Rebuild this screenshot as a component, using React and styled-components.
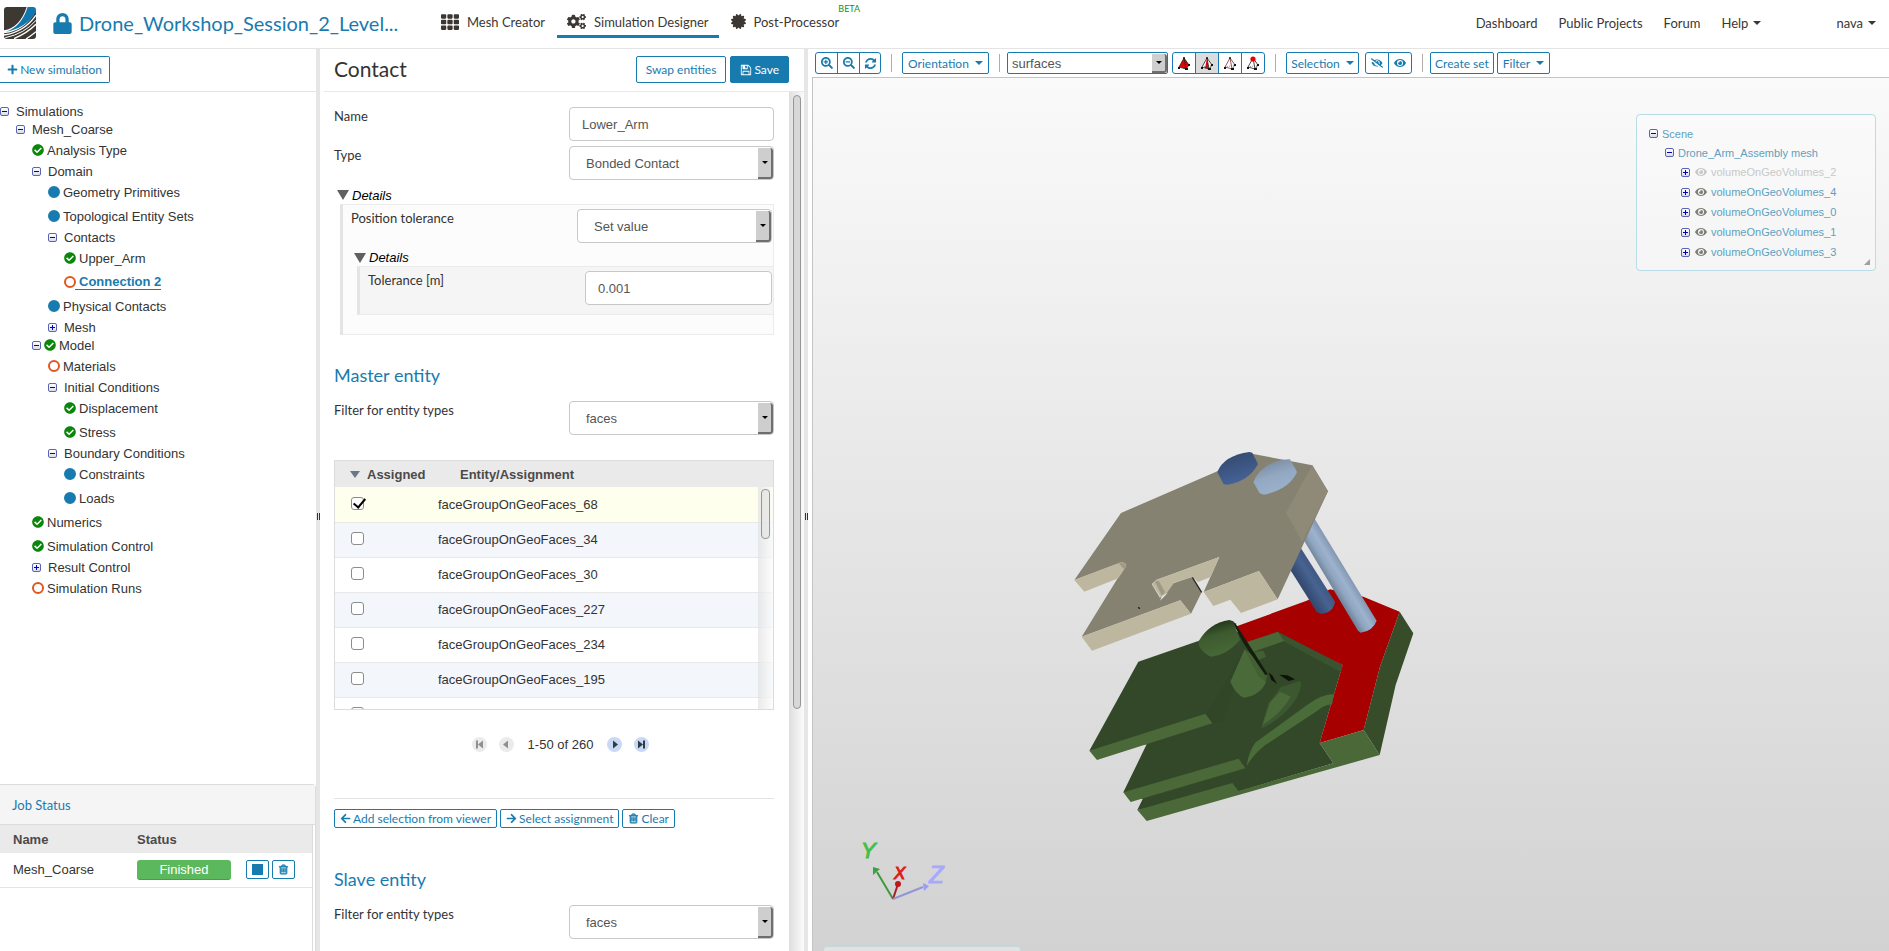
import React from 'react'
import styled, { createGlobalStyle, css } from 'styled-components'
import {
  FaArrowLeft, FaArrowRight, FaCertificate, FaCheckCircle, FaCogs, FaEye, FaEyeSlash,
  FaLock, FaPlus, FaSearchMinus, FaSearchPlus, FaTh
} from 'react-icons/fa'

const blue = '#187bb0';
const lato = "Lato, 'Open Sans', sans-serif";
const helvetica = "'Liberation Sans', Arial, sans-serif";

const GlobalStyle = createGlobalStyle`
  * {
    box-sizing: border-box;
  }
  body {
    margin: 0;
    overflow: hidden;
    background-color: #fff;
    color: #333;
    font-family: ${helvetica};
    font-size: 13px;
  }
  button, input, select {
    font: inherit;
    margin: 0;
  }
  svg {
    display: block;
    flex: none;
  }
`;

const Page = styled.div`
  display: flex;
  flex-direction: column;
  height: 100vh;
`;

/* header */

const Header = styled.header`
  display: flex;
  align-items: center;
  flex: none;
  height: 49px;
  padding: 0 13px 2px 4px;
  border-bottom: 1px solid #e4e4e4;
  font-family: ${lato};
  font-size: 13px;
  color: #3c3732;
`;

const ProjectLink = styled.a`
  display: flex;
  align-items: center;
  gap: 6px;
  width: 353px;
  margin-left: 16px;
  color: ${blue};
  font-size: 20px;
  text-decoration: none;
`;

const Tabs = styled.nav`
  display: flex;
  gap: 2px;
  margin-left: 26px;
`;

const Tab = styled.a`
  display: flex;
  align-items: center;
  gap: 8px;
  height: 30px;
  padding: 0 10px;
  border-bottom: 3px solid ${props => props.$active ? blue : 'transparent'};
  color: inherit;
  text-decoration: none;
`;

const Beta = styled.sup`
  align-self: flex-start;
  margin: -5px 0 0 -9px;
  color: #149314;
  font-size: 9px;
  line-height: 12px;
`;

const Account = styled.nav`
  display: flex;
  gap: 21px;
  margin-left: auto;
`;

const AccountLink = styled.a`
  display: flex;
  align-items: center;
  gap: 5px;
  margin-left: ${props => props.$user ? '54px' : 0};
  color: inherit;
  text-decoration: none;
`;

const Caret = styled.span`
  border: 4px solid transparent;
  border-top-color: currentColor;
  border-bottom-width: 0;
`;

/* columns */

const Columns = styled.main`
  display: flex;
  flex: 1;
  min-height: 0;
`;

const Sidebar = styled.aside`
  display: flex;
  flex-direction: column;
  flex: 0 0 316px;
`;

const Splitter = styled.div`
  display: flex;
  align-items: center;
  justify-content: flex-end;
  gap: 1px;
  flex: 0 0 4px;
  padding-top: 32px;
  background-color: #e6e6e6;
  &::before, &::after {
    content: '';
    width: 1px;
    height: 7px;
    background-color: #333;
  }
`;

const Button = styled.button`
  display: flex;
  align-items: center;
  justify-content: center;
  gap: 2px;
  height: ${props => props.$size === 'large' ? 27 : props.$size === 'small' ? 19 : 22}px;
  padding: 0 ${props => props.$size === 'large' ? 9 : 5}px;
  border: 1px solid ${blue};
  border-radius: 2px;
  background-color: ${props => props.$primary ? blue : '#fff'};
  color: ${props => props.$primary ? '#fff' : blue};
  font-family: ${lato};
  font-size: 12px;
  white-space: nowrap;
  cursor: pointer;
`;

const SidebarBar = styled.div`
  flex: none;
  height: 43px;
  padding-top: 7px;
  border-bottom: 1px solid #e4e4e4;
`;

const NewButton = styled(Button)`
  width: 110px;
  border-left: 0;
  border-radius: 0 2px 2px 0;
`;

/* simulation tree */

const Tree = styled.ul`
  flex: 1;
  min-height: 0;
  margin: 0;
  padding: 10px 0 0;
  list-style: none;
`;

const TreeRow = styled.li`
  display: flex;
  align-items: center;
  gap: 3px;
  height: ${props => props.$folder ? 18 : 24}px;
  padding-left: ${props => props.$level * 16}px;
`;

const TreeText = styled.a`
  padding-left: ${props => props.$wide ? 4 : 0}px;
  color: #333;
  text-decoration: none;
  ${props => props.$selected && css`
    margin-left: -4px;
    padding-left: 4px;
    border-bottom: 1px solid ${blue};
    color: ${blue};
    font-weight: bold;
  `}
`;

const Dot = styled.span`
  width: 12px;
  height: 12px;
  border: 2px solid ${props => props.$color};
  border-radius: 50%;
  background-color: ${props => props.$filled ? props.$color : '#fff'};
`;

const ToggleButton = styled.button`
  position: relative;
  flex: none;
  width: 9px;
  height: 9px;
  padding: 0;
  border: 1px solid #5a64b4;
  border-radius: 2px;
  background: linear-gradient(#fff, #dcdce8);
  &::before {
    content: '';
    position: absolute;
    left: 1px;
    top: 3px;
    width: 5px;
    height: 1px;
    background-color: #0000c0;
  }
  &::after {
    content: '';
    position: absolute;
    display: ${props => props.$open ? 'none' : 'block'};
    left: 3px;
    top: 1px;
    width: 1px;
    height: 5px;
    background-color: #0000c0;
  }
`;

/* jobs */

const Jobs = styled.section`
  flex: none;
  height: 167px;
  border: solid #dcdcdc;
  border-width: 1px 1px 0 0;
  border-radius: 0 4px 0 0;
`;

const JobsTitle = styled.h2`
  margin: 0;
  height: 40px;
  padding-left: 12px;
  border-bottom: 1px solid #dcdcdc;
  background-color: #f5f5f5;
  color: ${blue};
  font-family: ${lato};
  font-size: 13px;
  font-weight: normal;
  line-height: 40px;
`;

const JobsBody = styled.div`
  height: 126px;
  margin-right: 2px;
  border-right: 1px solid #dcdcdc;
`;

const JobsTable = styled.table`
  width: 100%;
  border-collapse: collapse;
  table-layout: fixed;
  th {
    height: 28px;
    padding: 0 0 0 13px;
    background-color: #eaeaea;
    color: #4a4a4a;
    text-align: left;
  }
  td {
    height: 34px;
    padding: 0 0 0 13px;
    border-bottom: 1px solid #e4e4e4;
  }
`;

const JobsCol = styled.col`
  width: ${props => props.$w}px;
`;

const Badge = styled.span`
  display: block;
  width: 94px;
  height: 20px;
  border-bottom: 1px solid #4a9c4a;
  border-radius: 3px;
  background-color: #5cb85c;
  color: #fff;
  line-height: 19px;
  text-align: center;
`;

const JobButtons = styled.div`
  display: flex;
  gap: 3px;
`;

const Stop = styled.span`
  width: 11px;
  height: 11px;
  background-color: ${blue};
`;

/* contact form */

const Panel = styled.section`
  display: flex;
  flex-direction: column;
  flex: 0 0 484px;
  padding-left: 4px;
`;

const PanelHead = styled.div`
  display: flex;
  align-items: flex-start;
  gap: 4px;
  flex: none;
  height: 43px;
  padding: 7px 15px 0 10px;
  border-bottom: 1px solid #e9e9e9;
`;

const PanelTitle = styled.h1`
  margin: 0 auto 0 0;
  font-family: ${lato};
  font-size: 21px;
  font-weight: normal;
  line-height: 26px;
`;

const PanelBody = styled.div`
  display: flex;
  flex: 1;
  min-height: 0;
`;

const Form = styled.form`
  flex: 1;
  min-width: 0;
  padding: 15px 15px 0 10px;
  overflow: hidden;
`;

const Scrollbar = styled.div`
  flex: 0 0 15px;
  padding: 3px 3px 0 4px;
  background: linear-gradient(to right, #dedede, #fbfbfb);
`;

const Thumb = styled.div`
  height: ${props => props.$h}px;
  border: 1px solid #969696;
  border-radius: 4px;
  background-color: ${props => props.$light ? 'rgba(225, 225, 225, .6)' : '#d8d8d8'};
`;

const FieldRow = styled.div`
  display: flex;
  justify-content: space-between;
  margin-bottom: 5px;
`;

const Label = styled.label`
  color: #333;
  font-family: ${lato};
  font-size: 13px;
  line-height: 18px;
`;

const field = css`
  height: 34px;
  border: 1px solid #c8c8c8;
  border-radius: 4px;
  background-color: #fff;
  color: #555;
`;

const TextInput = styled.input`
  ${field}
  width: ${props => props.$w}px;
  padding: 0 12px;
`;

const SelectBox = styled.span`
  display: grid;
  width: ${props => props.$w}px;
`;

const Select = styled.select`
  ${field}
  grid-area: 1 / 1;
  padding: 0 20px 0 16px;
  appearance: none;
  ${props => props.$tool && css`
    height: 22px;
    padding-left: 4px;
    border-color: ${blue};
    border-radius: 2px;
    font-size: 13px;
  `}
`;

const SelectArrow = styled.span`
  grid-area: 1 / 1;
  display: flex;
  align-items: center;
  justify-content: center;
  justify-self: end;
  width: 15px;
  margin: 2px 1px 1px 0;
  border: solid #6e6e6e;
  border-width: 0 2px 2px 0;
  border-radius: 0 3px 3px 0;
  background-color: #cecece;
  color: #000;
  pointer-events: none;
  &::before {
    content: '';
    border: 3px solid transparent;
    border-top-color: #000;
    border-bottom-width: 0;
  }
`;

const Fieldset = styled.details`
  margin-top: 6px;
  margin-left: 3px;
`;

const Summary = styled.summary`
  display: flex;
  align-items: center;
  gap: 3px;
  height: ${props => props.$h}px;
  color: #000;
  font-style: italic;
  list-style: none;
  &::before {
    content: '';
    border: solid transparent;
    border-width: 10px 6px 0;
    border-top-color: #606060;
  }
`;

const FieldsetBody = styled.div`
  margin-left: 3px;
  margin-right: ${props => props.$inner ? -2 : 0}px;
  padding: 4px 1px 0 8px;
  height: ${props => props.$inner ? 49 : 131}px;
  border: 1px solid #ebebeb;
  border-left: 3px solid #e4e4e4;
  background-color: ${props => props.$inner ? '#f5f5f5' : '#fcfcfc'};
`;

const SectionTitle = styled.h2`
  margin: ${props => props.$top}px 0 14px;
  color: ${blue};
  font-family: ${lato};
  font-size: 18px;
  font-weight: normal;
  line-height: 24px;
`;

const EntityBox = styled.div`
  position: relative;
  height: 250px;
  margin-top: 25px;
  border: 1px solid #dcdcdc;
  overflow: hidden;
`;

const EntityTable = styled.table`
  width: 100%;
  border-collapse: collapse;
  table-layout: fixed;
  th {
    height: 26px;
    padding: 0;
    background-color: #eaeaea;
    color: #4a4a4a;
    text-align: left;
  }
`;

const AssignedCol = styled.col`
  width: 87px;
`;

const SortHead = styled.span`
  display: flex;
  align-items: center;
  gap: 7px;
  padding-left: 15px;
  &::before {
    content: '';
    border: solid transparent;
    border-width: 7px 5px 0;
    border-top-color: #6c7786;
  }
`;

const HeadText = styled.span`
  padding-left: 38px;
`;

const EntityRow = styled.tr`
  background-color: ${props => props.$checked ? '#ffffee' : props.$odd ? '#f3f6fb' : '#fff'};
  td {
    height: 35px;
    padding: 0 0 0 16px;
    border-bottom: 1px solid #e8e8e8;
  }
`;

const Check = styled.input`
  display: block;
  width: 13px;
  height: 13px;
  margin: 0 0 2px;
  border: 1px solid #8c8c8c;
  border-radius: 3px;
  background-color: #fff;
  appearance: none;
  &:checked::before {
    content: '';
    display: block;
    width: 5px;
    height: 10px;
    margin: -2px 0 0 4px;
    border: solid #000;
    border-width: 0 2px 2px 0;
    transform: rotate(40deg);
  }
`;

const EntityScroll = styled.div`
  position: absolute;
  top: 26px;
  right: 0;
  bottom: 0;
  width: 15px;
  padding: 2px 3px;
  background: linear-gradient(to right, rgba(225, 225, 225, .7), rgba(252, 252, 252, .7));
`;

const Pager = styled.div`
  display: flex;
  align-items: center;
  justify-content: center;
  gap: 12px;
  height: 69px;
  margin-bottom: 19px;
  padding-left: 13px;
`;

const PagerText = styled.span`
  padding: 0 2px;
`;

const PagerButton = styled.button`
  width: 15px;
  height: 15px;
  padding: 0;
  border: 0;
  border-radius: 50%;
  background-color: ${props => props.disabled ? '#ebebeb' : '#c8d9f5'};
  color: ${props => props.disabled ? '#909090' : '#333a44'};
`;

const Actions = styled.div`
  display: flex;
  gap: 3px;
  padding-top: 10px;
  border-top: 1px solid #e4e4e4;
`;

/* viewer */

const Viewer = styled.section`
  display: flex;
  flex-direction: column;
  flex: 1;
  min-width: 0;
  padding-left: 4px;
`;

const Toolbar = styled.div`
  display: flex;
  align-items: center;
  flex: none;
  height: 28px;
  padding: 0 3px;
`;

const Group = styled.div`
  display: flex;
  margin-right: ${props => props.$after || 0}px;
`;

const GroupButton = styled(Button)`
  width: ${props => props.$w}px;
  height: 22px;
  margin-left: -1px;
  padding: 0;
  border-radius: 0;
  background-color: ${props => props.$pressed ? '#dcdcdc' : '#fff'};
  &:first-child {
    margin-left: 0;
    border-radius: 3px 0 0 3px;
  }
  &:last-child {
    border-radius: 0 3px 3px 0;
  }
`;

const Divider = styled.span`
  width: 1px;
  height: 18px;
  margin: 0 ${props => props.$tight ? 7 : 10}px 0 10px;
  background-color: #b4aca8;
`;

const ToolButton = styled(Button)`
  gap: 6px;
  width: ${props => props.$w}px;
  margin-right: ${props => props.$after || 0}px;
`;

const Stage = styled.div`
  position: relative;
  flex: 1;
  min-height: 0;
  border: solid #c4c4c4;
  border-width: 1px 0 0 1px;
  background: linear-gradient(#fafafa, #d2d2d2);
  overflow: hidden;
`;

const ScenePanel = styled.div`
  position: absolute;
  top: 36px;
  right: 13px;
  width: 240px;
  height: 157px;
  padding: 9px 12px 0;
  border: 1px solid #b9dde6;
  border-radius: 4px;
  background-color: rgba(255, 255, 255, .3);
  font-size: 11px;
`;

const SceneRow = styled.div`
  display: flex;
  align-items: center;
  gap: 4px;
  height: ${props => props.$level === 2 ? 20 : 19}px;
  padding-left: ${props => props.$level * 16}px;
  color: ${props => props.$muted ? '#c8c8c8' : '#5fa0c0'};
  svg {
    margin-left: 1px;
    color: ${props => props.$muted ? '#c8c8c8' : '#808078'};
  }
`;

const Grip = styled.span`
  position: absolute;
  right: 5px;
  bottom: 5px;
  border: 3px solid #a0a0a0;
  border-top-color: transparent;
  border-left-color: transparent;
`;

const FooterPanel = styled.div`
  position: absolute;
  left: 10px;
  bottom: 0;
  width: 198px;
  height: 5px;
  border: 1px solid #c2dade;
  border-bottom: 0;
  border-radius: 4px 4px 0 0;
  background-color: #e2e2e2;
`;

const glyphs = {
  save: 'M512 1536h768v-384h-768v384zM1408 1536h128v-896q0-14-10-38.5t-20-34.5l-281-281q-10-10-34-20t-39-10v416q0 40-28 68t-68 28h-576q-40 0-68-28t-28-68v-416h-128v1280h128v-416q0-40 28-68t68-28h832q40 0 68 28t28 68v416zM1024 608v-320q0-13-9.5-22.5t-22.5-9.5h-192q-13 0-22.5 9.5t-9.5 22.5v320q0 13 9.5 22.5t22.5 9.5h192q13 0 22.5-9.5t9.5-22.5zM1664 640v928q0 40-28 68t-68 28h-1344q-40 0-68-28t-28-68v-1344q0-40 28-68t68-28h928q40 0 88 20t76 48l280 280q28 28 48 76t20 88z',
  trash: 'M704 736v576q0 14-9 23t-23 9h-64q-14 0-23-9t-9-23v-576q0-14 9-23t23-9h64q14 0 23 9t9 23zm256 0v576q0 14-9 23t-23 9h-64q-14 0-23-9t-9-23v-576q0-14 9-23t23-9h64q14 0 23 9t9 23zm256 0v576q0 14-9 23t-23 9h-64q-14 0-23-9t-9-23v-576q0-14 9-23t23-9h64q14 0 23 9t9 23zm128 724v-948h-896v948q0 22 7 40.5t14.5 27 10.5 8.5h832q3 0 10.5-8.5t14.5-27 7-40.5zm-672-1076h448l-48-117q-7-9-17-11h-317q-10 2-17 11zm928 32v64q0 14-9 23t-23 9h-96v948q0 83-47 143.5t-113 60.5h-832q-66 0-113-58.5t-47-141.5v-952h-96q-14 0-23-9t-9-23v-64q0-14 9-23t23-9h309l70-167q15-37 54-63t79-26h320q40 0 79 26t54 63l70 167h309q14 0 23 9t9 23z',
  refresh: 'M1639 1056q0 5-1 7-64 268-268 434.5t-478 166.5q-146 0-282.5-55t-243.5-157l-129 129q-19 19-45 19t-45-19-19-45v-448q0-26 19-45t45-19h448q26 0 45 19t19 45-19 45l-137 137q71 66 161 102t187 36q134 0 250-65t186-179q11-17 53-117 8-23 30-23h192q13 0 22.5 9.5t9.5 22.5zm25-800v448q0 26-19 45t-45 19h-448q-26 0-45-19t-19-45 19-45l138-138q-148-137-349-137-134 0-250 65t-186 179q-11 17-53 117-8 23-30 23h-199q-13 0-22.5-9.5t-9.5-22.5v-7q65-268 270-434.5t480-166.5q146 0 284 55.5t245 156.5l130-129q19-19 45-19t45 19 19 45z'
};

const Glyph = ({ name, size, heavy }) => (
  <svg
    width={size}
    height={size}
    viewBox="0 0 1792 1792"
    fill="currentColor"
    stroke={heavy ? 'currentColor' : 'none'}
    strokeWidth="90"
  >
    <path d={glyphs[name]} />
  </svg>
);

const Logo = () => (
  <svg width="32" height="32" viewBox="0 0 96 96">
    <rect width="96" height="96" rx="9" fill="#3e3833" />
    <path d="M68 0 H96 V12 Q62 72 0 79 V70 Q48 62 68 0z" fill="#fff" />
    <path d="M71 0 H87 Q96 0 96 10 V16 Q62 66 6 74 Q52 60 71 0z" fill="#0f76ae" />
    <path d="M96 24 Q62 74 0 84" fill="none" stroke="#fff" strokeWidth="4" />
    <path d="M96 52 Q70 78 30 95" fill="none" stroke="#fff" strokeWidth="4" />
    <path d="M96 40 Q62 80 4 92" fill="none" stroke="#fff" strokeWidth="3" />
    <path d="M96 74 Q84 84 66 96" fill="none" stroke="#fff" strokeWidth="4" />
  </svg>
);

// little pyramid used by the pick mode buttons
const Pyramid = ({ mode }) => (
  <svg width="14" height="14" viewBox="0 0 14 14" strokeLinejoin="round">
    <path d="M7 2 L2 11 L9 13 L12 9z" fill={mode === 'volume' ? '#e80000' : '#fff'} />
    {mode === 'face' && <path d="M7 2 L9 13 L5 12z" fill="#e80000" />}
    <path
      d="M7 2 L2 11 L9 13 L12 9z M7 2 L9 13"
      fill="none"
      stroke={mode === 'edge' ? '#803030' : '#222'}
      strokeWidth="0.8"
    />
    <path d="M2 11 L12 9" stroke="#555" strokeWidth="0.6" strokeDasharray="1 1" />
    <path d="M1 12h2M8 13h3M11 9h2" stroke="#111" strokeWidth="2" />
    {mode === 'vertex'
      ? <circle cx="7" cy="3" r="2.6" fill="#e80000" />
      : <circle cx="7" cy="2" r="1" fill="#111" />}
  </svg>
);

const Assembly = () => (
  <svg width="100%" height="100%">
    <defs>
      <linearGradient id="head1" x1="0.2" y1="0" x2="0.6" y2="1">
        <stop offset="0" stopColor="#31466a" />
        <stop offset="1" stopColor="#48659a" />
      </linearGradient>
      <linearGradient id="head2" x1="0.2" y1="0" x2="0.6" y2="1">
        <stop offset="0" stopColor="#75869c" />
        <stop offset="0.5" stopColor="#93a8c2" />
        <stop offset="1" stopColor="#9db2cd" />
      </linearGradient>
      <linearGradient id="head3" x1="0.3" y1="0" x2="0.6" y2="1">
        <stop offset="0" stopColor="#1c2a15" />
        <stop offset="0.4" stopColor="#3c5a2e" />
        <stop offset="1" stopColor="#4a6a39" />
      </linearGradient>
      <linearGradient id="rod1" gradientUnits="userSpaceOnUse" x1="760" y1="470" x2="815" y2="435">
        <stop offset="0" stopColor="#354b72" />
        <stop offset="0.5" stopColor="#486391" />
        <stop offset="1" stopColor="#3c547f" />
      </linearGradient>
      <linearGradient id="rod2" gradientUnits="userSpaceOnUse" x1="835" y1="455" x2="892" y2="420">
        <stop offset="0" stopColor="#71839b" />
        <stop offset="0.3" stopColor="#8fa5c0" />
        <stop offset="0.6" stopColor="#9db2cd" />
        <stop offset="1" stopColor="#7f93ae" />
      </linearGradient>
    </defs>
    <g transform="translate(237 522) scale(.33333)">
      <path fill="#334829" d="M265 185 L447 122 L590 90 L700 95 L878 195 L809 429 L850 490 L563 575 L262 630 L278 597 L220 577 L290 433 L118 452z" />
      <path fill="#2f4426" d="M583 150 L470 341 L487 370 L520 365z" opacity=".5" />
      <path fill="#3a5330" d="M684 95 L878 195 L872 216 L703 125z" />
      <path fill="#a60000" d="M560 79 L770 2 L840 -32 L940 -10 L1049 35 L990 200 L941 390 L809 429 L878 195 L684 95 L590 127z" />
      <path fill="#374d2a" d="M1049 35 L1090 100 L1037 255 L989 465 L941 390 L990 200z" />
      <path fill="#4a6838" d="M118 452 L466 341 L487 370 L141 480z" />
      <path fill="#4a6838" d="M220 577 L566 476 L586 505 L242 606z" />
      <path fill="#4a6838" d="M262 630 L547 549 L565 573 L850 490 L809 429 L941 390 L989 465 L290 663z" />
      <path fill="#4a6838" d="M588 127 L684 95 L703 123 L606 157z" />
      <path fill="#436032" d="M612 155 L640 152 L648 170 L626 180z" />
      <path fill="#4a6c39" d="M590 498 Q596 455 617 427 L770 316 Q815 282 852 282 L846 314 Q826 312 800 334 L645 436 Q608 466 590 498z" />
      <path fill="#3c5830" d="M692 262 Q665 300 655 310 L633 386 Q700 356 740 295 Q756 262 752 242z" />
      <path fill="#4e703c" d="M690 275 L660 308 L638 374 Q694 340 722 290z" opacity=".8" />
      <path fill="#0c1308" d="M688 224 L712 226 L735 238 L716 243z M656 217 L668 228 L681 252 L664 240z" />
      <path fill="#4a6b39" d="M584 148 L541 245 Q558 285 583 293 Q632 285 648 246 L650 224 L610 170z" />
      <path fill="#3e5c30" d="M584 148 L650 224 L648 246 L625 228z" opacity=".7" />
      <path fill="#141d0e" d="M545 62 L556 70 L653 222 L646 226 L582 132z" />
      <path fill="url(#head3)" d="M446 124 Q476 70 538 60 L550 64 L570 120 Q530 166 483 170 Q458 160 446 136z" />
    </g>
    <g transform="translate(237 352) scale(.33333)">
      <path fill="url(#rod1)" d="M750 350 L855 515 Q850 548 812 552 L800 545 L715 410z" />
      <path fill="url(#rod2)" d="M793 265 L980 572 Q968 604 932 608 L924 602 L758 325z" />
      <path fill="#868271" d="M213 249 L502 124 L610 72 L787 106 L834 184 L683 508 L627 423 L461 486 L508 381 L320 449 L305 462 L330 503 L370 460 L425 441 L455 487 L423 551 L391 511 L95 620 L228 404 L218 396 L73 450z" />
      <path fill="#8e8a77" d="M787 106 L834 184 L757 335 L708 248z" />
      <path fill="#bdb79f" d="M73 450 L214 396 L229 409 L205 445 L103 485z" />
      <path fill="#a09a84" d="M206 399 L218 396 L230 408 L222 418z" />
      <path fill="#bdb79f" d="M95 620 L391 511 L423 551 L126 662z" />
      <path fill="#bdb79f" d="M461 486 L627 423 L683 508 L573 549 L541 509 L490 528z" />
      <path fill="#bdb79f" d="M306 461 L320 449 L508 381 L482 441 L444 456 L427 441 L372 458 L350 490 L333 503z" />
      <path fill="#a09a84" d="M315 455 L326 452 L345 486 L336 497z" />
      <path fill="#e6e6e6" d="M330 512 L336 498 L354 488z" />
      <path stroke="#2a2822" strokeWidth="4" d="M427 442 L455 487 M264 532 L270 536" />
      <path fill="url(#head1)" d="M502 126 Q522 76 598 66 L607 68 L624 102 Q598 152 534 164 L521 163z" />
      <path fill="url(#head2)" d="M610 156 Q632 102 698 89 L720 88 L741 126 Q718 178 642 194 L629 190z" />
    </g>
    <g fill="none" strokeWidth="2">
      <path stroke="#3f9a3f" d="M80 821 L64 794" />
      <path stroke="#a02020" d="M80 821 L85 806" />
      <path stroke="#9494d8" d="M80 821 L110 809" />
    </g>
    <path fill="#3fa03f" d="M60 789 L67 791 L60 797z" />
    <circle cx="85" cy="806" r="3" fill="#c01818" />
    <path fill="#9c9cf0" d="M110 805 L116 808 L111 813z" />
    <g fontFamily="Liberation Sans" fontStyle="italic" strokeWidth="1">
      <text x="48" y="780" fontSize="22" fill="#43c043" stroke="#43c043">Y</text>
      <text x="81" y="801" fontSize="17" fill="#e01818" stroke="#e01818">X</text>
      <text x="116" y="805" fontSize="24" fill="#a8a8ff" stroke="#a8a8ff">Z</text>
    </g>
  </svg>
);

const tree = [
  { level: 0, text: 'Simulations', open: true },
  { level: 1, text: 'Mesh_Coarse', open: true },
  { level: 2, text: 'Analysis Type', status: 'done' },
  { level: 2, text: 'Domain', open: true },
  { level: 3, text: 'Geometry Primitives', status: 'optional' },
  { level: 3, text: 'Topological Entity Sets', status: 'optional' },
  { level: 3, text: 'Contacts', open: true },
  { level: 4, text: 'Upper_Arm', status: 'done' },
  { level: 4, text: 'Connection 2', status: 'missing', selected: true },
  { level: 3, text: 'Physical Contacts', status: 'optional' },
  { level: 3, text: 'Mesh', open: false },
  { level: 2, text: 'Model', open: true, status: 'done' },
  { level: 3, text: 'Materials', status: 'missing' },
  { level: 3, text: 'Initial Conditions', open: true },
  { level: 4, text: 'Displacement', status: 'done' },
  { level: 4, text: 'Stress', status: 'done' },
  { level: 3, text: 'Boundary Conditions', open: true },
  { level: 4, text: 'Constraints', status: 'optional' },
  { level: 4, text: 'Loads', status: 'optional' },
  { level: 2, text: 'Numerics', status: 'done' },
  { level: 2, text: 'Simulation Control', status: 'done' },
  { level: 2, text: 'Result Control', open: false },
  { level: 2, text: 'Simulation Runs', status: 'missing' }
];

const entities = [68, 34, 30, 227, 234, 195];
const volumes = [2, 4, 0, 1, 3];

const StatusIcon = ({ status }) => {
  if (status === 'done') return <FaCheckCircle size={12} color="#0a860a" />;
  if (status === 'optional') return <Dot $color={blue} $filled />;
  if (status === 'missing') return <Dot $color="#e2561f" />;
  return null;
};

const SelectField = ({ id, width, value, tool, label }) => (
  <SelectBox $w={width}>
    <Select id={id} $tool={tool} aria-label={label} defaultValue={value}>
      <option>{value}</option>
    </Select>
    <SelectArrow />
  </SelectBox>
);

const SimulationTree = () => (
  <Tree>
    {tree.map(node => {
      const folder = node.open !== undefined;
      return (
        <TreeRow key={node.text} $level={node.level} $folder={folder}>
          {folder && <ToggleButton type="button" $open={node.open} aria-label={'Toggle ' + node.text} />}
          <StatusIcon status={node.status} />
          <TreeText href="#" $wide={folder && !node.status} $selected={node.selected}>{node.text}</TreeText>
        </TreeRow>
      );
    })}
  </Tree>
);

const JobStatus = () => (
  <Jobs>
    <JobsTitle>Job Status</JobsTitle>
    <JobsBody>
      <JobsTable>
        <colgroup>
          <JobsCol $w={124} />
          <JobsCol $w={109} />
          <JobsCol />
        </colgroup>
        <thead>
          <tr><th>Name</th><th>Status</th><th /></tr>
        </thead>
        <tbody>
          <tr>
            <td>Mesh_Coarse</td>
            <td><Badge>Finished</Badge></td>
            <td>
              <JobButtons>
                <Button $size="small" aria-label="Stop"><Stop /></Button>
                <Button $size="small" aria-label="Delete"><Glyph name="trash" size={11} heavy /></Button>
              </JobButtons>
            </td>
          </tr>
        </tbody>
      </JobsTable>
    </JobsBody>
  </Jobs>
);

const EntityList = () => (
  <EntityBox>
    <EntityTable>
      <colgroup>
        <AssignedCol />
        <col />
      </colgroup>
      <thead>
        <tr>
          <th><SortHead>Assigned</SortHead></th>
          <th><HeadText>Entity/Assignment</HeadText></th>
        </tr>
      </thead>
      <tbody>
        {entities.map((n, i) => (
          <EntityRow key={n} $checked={i === 0} $odd={i % 2 === 1}>
            <td><Check type="checkbox" id={'entity' + n} defaultChecked={i === 0} /></td>
            <td><label htmlFor={'entity' + n}>faceGroupOnGeoFaces_{n}</label></td>
          </EntityRow>
        ))}
        <EntityRow>
          <td><Check type="checkbox" aria-label="Next entity" /></td>
          <td />
        </EntityRow>
      </tbody>
    </EntityTable>
    <EntityScroll><Thumb $h={50} $light /></EntityScroll>
  </EntityBox>
);

const PagerIcon = ({ end, back }) => (
  <svg width="15" height="15" viewBox="0 0 15 15" fill="currentColor">
    <g transform={back ? 'translate(15 0) scale(-1 1)' : undefined}>
      <path d={end ? 'M4 3.5 L9 7.5 L4 11.5z M9 3.5h2v8h-2z' : 'M6 3.5 L11 7.5 L6 11.5z'} />
    </g>
  </svg>
);

const ContactPanel = () => (
  <Panel>
    <PanelHead>
      <PanelTitle>Contact</PanelTitle>
      <Button $size="large">Swap entities</Button>
      <Button $size="large" $primary><Glyph name="save" size={12} />Save</Button>
    </PanelHead>
    <PanelBody>
      <Form>
        <FieldRow>
          <Label htmlFor="name">Name</Label>
          <TextInput id="name" type="text" $w={205} defaultValue="Lower_Arm" />
        </FieldRow>
        <FieldRow>
          <Label htmlFor="type">Type</Label>
          <SelectField id="type" width={205} value="Bonded Contact" />
        </FieldRow>
        <Fieldset open>
          <Summary $h={18}>Details</Summary>
          <FieldsetBody>
            <FieldRow>
              <Label htmlFor="position">Position tolerance</Label>
              <SelectField id="position" width={195} value="Set value" />
            </FieldRow>
            <Fieldset open>
              <Summary $h={17}>Details</Summary>
              <FieldsetBody $inner>
                <FieldRow>
                  <Label htmlFor="tolerance">Tolerance [m]</Label>
                  <TextInput id="tolerance" type="text" $w={187} defaultValue="0.001" />
                </FieldRow>
              </FieldsetBody>
            </Fieldset>
          </FieldsetBody>
        </Fieldset>
        <SectionTitle $top={28}>Master entity</SectionTitle>
        <FieldRow>
          <Label htmlFor="masterFilter">Filter for entity types</Label>
          <SelectField id="masterFilter" width={205} value="faces" />
        </FieldRow>
        <EntityList />
        <Pager>
          <PagerButton type="button" disabled aria-label="First page"><PagerIcon end back /></PagerButton>
          <PagerButton type="button" disabled aria-label="Previous page"><PagerIcon back /></PagerButton>
          <PagerText>1-50 of 260</PagerText>
          <PagerButton type="button" aria-label="Next page"><PagerIcon /></PagerButton>
          <PagerButton type="button" aria-label="Last page"><PagerIcon end /></PagerButton>
        </Pager>
        <Actions>
          <Button type="button" $size="small"><FaArrowLeft size={11} />Add selection from viewer</Button>
          <Button type="button" $size="small"><FaArrowRight size={11} />Select assignment</Button>
          <Button type="button" $size="small"><Glyph name="trash" size={11} heavy />Clear</Button>
        </Actions>
        <SectionTitle $top={39}>Slave entity</SectionTitle>
        <FieldRow>
          <Label htmlFor="slaveFilter">Filter for entity types</Label>
          <SelectField id="slaveFilter" width={205} value="faces" />
        </FieldRow>
      </Form>
      <Scrollbar><Thumb $h={614} /></Scrollbar>
    </PanelBody>
  </Panel>
);

const ViewerToolbar = () => (
  <Toolbar>
    <Group>
      <GroupButton $w={23} aria-label="Zoom in"><FaSearchPlus size={12} /></GroupButton>
      <GroupButton $w={23} aria-label="Zoom out"><FaSearchMinus size={12} /></GroupButton>
      <GroupButton $w={22} aria-label="Reset view"><Glyph name="refresh" size={13} /></GroupButton>
    </Group>
    <Divider />
    <ToolButton $w={87}>Orientation<Caret /></ToolButton>
    <Divider $tight />
    <Group $after={4}>
      <SelectField width={161} value="surfaces" tool label="Pick mode" />
    </Group>
    <Group>
      <GroupButton $w={24} aria-label="Volumes"><Pyramid mode="volume" /></GroupButton>
      <GroupButton $w={24} $pressed aria-label="Faces"><Pyramid mode="face" /></GroupButton>
      <GroupButton $w={24} aria-label="Edges"><Pyramid mode="edge" /></GroupButton>
      <GroupButton $w={24} aria-label="Vertices"><Pyramid mode="vertex" /></GroupButton>
    </Group>
    <Divider />
    <ToolButton $w={73} $after={6}>Selection<Caret /></ToolButton>
    <Group>
      <GroupButton $w={24} aria-label="Hide selection"><FaEyeSlash size={12} /></GroupButton>
      <GroupButton $w={24} aria-label="Show all"><FaEye size={12} /></GroupButton>
    </Group>
    <Divider $tight />
    <ToolButton $w={64} $after={3}>Create set</ToolButton>
    <ToolButton $w={53}>Filter<Caret /></ToolButton>
  </Toolbar>
);

const Scene = () => (
  <ScenePanel>
    <SceneRow $level={0}><ToggleButton $open aria-label="Toggle scene" />Scene</SceneRow>
    <SceneRow $level={1}><ToggleButton $open aria-label="Toggle mesh" />Drone_Arm_Assembly mesh</SceneRow>
    {volumes.map(n => (
      <SceneRow key={n} $level={2} $muted={n === 2}>
        <ToggleButton aria-label={'Toggle volume ' + n} />
        <FaEye size={12} />
        volumeOnGeoVolumes_{n}
      </SceneRow>
    ))}
    <Grip />
  </ScenePanel>
);

class App extends React.Component {
  render() {
    return (
      <Page>
        <GlobalStyle />
        <Header>
          <Logo />
          <ProjectLink href="#">
            <FaLock size={21} />
            Drone_Workshop_Session_2_Level...
          </ProjectLink>
          <Tabs>
            <Tab href="#"><FaTh size={18} />Mesh Creator</Tab>
            <Tab href="#" $active><FaCogs size={19} />Simulation Designer</Tab>
            <Tab href="#"><FaCertificate size={15} />Post-Processor<Beta>BETA</Beta></Tab>
          </Tabs>
          <Account>
            <AccountLink href="#">Dashboard</AccountLink>
            <AccountLink href="#">Public Projects</AccountLink>
            <AccountLink href="#">Forum</AccountLink>
            <AccountLink href="#">Help<Caret /></AccountLink>
            <AccountLink href="#" $user>nava<Caret /></AccountLink>
          </Account>
        </Header>
        <Columns>
          <Sidebar>
            <SidebarBar>
              <NewButton $size="large"><FaPlus size={11} />New simulation</NewButton>
            </SidebarBar>
            <SimulationTree />
            <JobStatus />
          </Sidebar>
          <Splitter />
          <ContactPanel />
          <Splitter />
          <Viewer>
            <ViewerToolbar />
            <Stage>
              <Assembly />
              <Scene />
              <FooterPanel />
            </Stage>
          </Viewer>
        </Columns>
      </Page>
    )
  }
}

export default App
